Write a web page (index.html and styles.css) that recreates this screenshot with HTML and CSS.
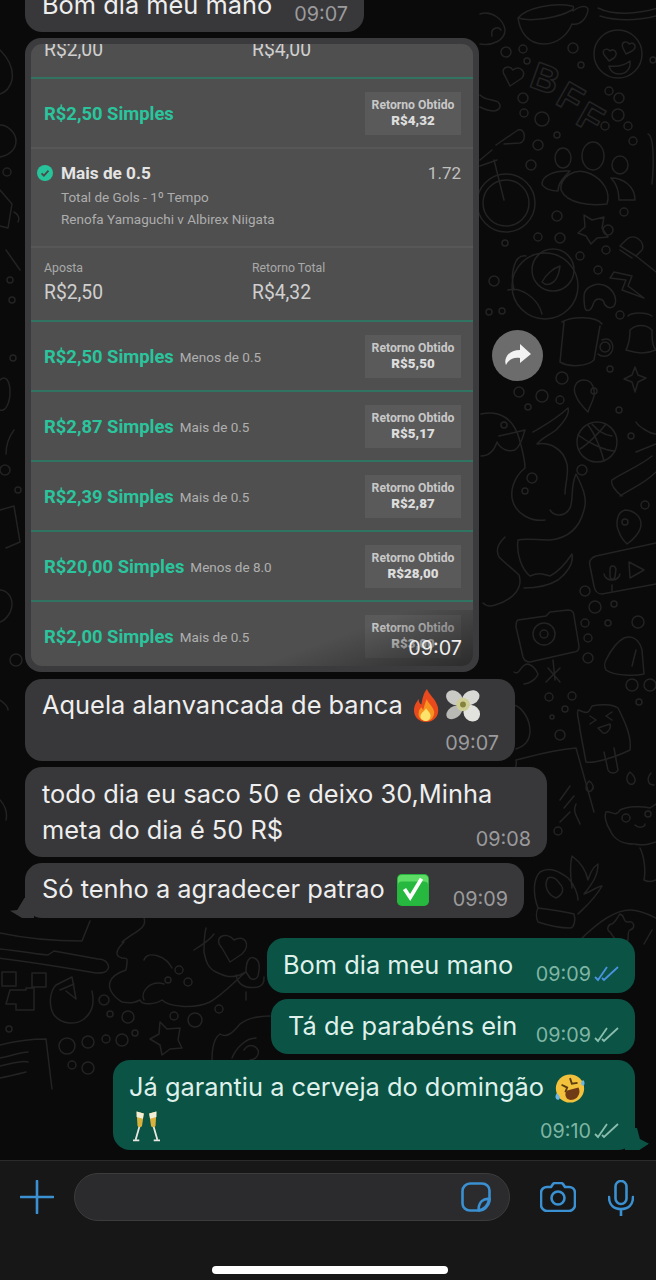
FILE: index.html
```html
<!DOCTYPE html>
<html lang="pt-BR">
<head>
    <meta charset="UTF-8">
    <meta name="viewport" content="width=device-width, initial-scale=1.0">
    <title>Conversa</title>
    <link rel="stylesheet" href="styles.css">
</head>
<body>
    <div class="phone">
        <!-- wallpaper doodles, coordinates are page pixels -->
        <svg class="doodles" viewBox="0 0 656 1160" aria-hidden="true">
            <!-- cup -->
            <path d="M518 18c2 14 10 26 26 26 14 0 24-10 28-20 8 2 15-6 16-14 0-4-6-5-12-1l-3 2M518 18c8-10 36-16 54-12 2 0 2 3 0 4-14 8-40 12-54 8z"/>
            <path d="M598 8c16 8 40 6 60 0M600 16c20 6 40 4 56 0"/>
            <!-- heart eyes -->
            <circle cx="618" cy="54" r="24"/>
            <path d="M605 56c-5-6 2-9 5-5 4-3 9 2 4 7l-5 3zM623 48c-3-6 4-8 6-4 5-3 9 3 3 7l-6 3zM609 66c8 1 16-1 21-5 1 8-4 13-11 13-5 0-9-3-10-8z"/>
            <!-- heart, half face -->
            <path d="M505 76c-6-8 4-12 8-6 6-5 14 1 9 8l-12 8z"/>
            <path d="M480 14c12-4 24 6 25 16 0 10-12 16-25 14M492 36c-2-8 6-10 9-6"/>
            <path d="M480 95c6 6 14 4 18 7 4 4 2 8-4 9-6 0-10-2-14-4"/>
            <circle cx="506" cy="52" r="5"/>
            <circle cx="523" cy="49" r="4"/>
            <circle cx="573" cy="48" r="5"/>
            <circle cx="527" cy="61" r="3"/>
            <circle cx="581" cy="65" r="3"/>
            <circle cx="523" cy="98" r="5"/>
            <circle cx="524" cy="113" r="4"/>
            <circle cx="542" cy="119" r="7"/>
            <circle cx="557" cy="135" r="3"/>
            <circle cx="538" cy="145" r="5"/>
            <circle cx="531" cy="165" r="5"/>
            <circle cx="609" cy="91" r="4"/>
            <circle cx="619" cy="98" r="5"/>
            <circle cx="618" cy="115" r="6"/>
            <circle cx="605" cy="126" r="4"/>
            <circle cx="628" cy="126" r="4"/>
            <circle cx="633" cy="141" r="4"/>
            <circle cx="653" cy="60" r="3"/>
            <!-- BFF -->
            <text class="doodle-word" transform="translate(528 86) rotate(20)">B</text>
            <text class="doodle-word" transform="translate(554 103) rotate(30)">F</text>
            <text class="doodle-word" transform="translate(574 123) rotate(30)">F</text>
            <!-- bike -->
            <circle cx="506" cy="203" r="29"/>
            <circle cx="506" cy="203" r="23"/>
            <path d="M504 200l-10-40M496 145l22-15c8-2 8 12 2 13l-16 1M497 160l-17 6M492 150l-12 10"/>
            <!-- group of people -->
            <ellipse cx="563" cy="158" rx="8" ry="10"/>
            <ellipse cx="593" cy="156" rx="11" ry="14"/>
            <ellipse cx="620" cy="165" rx="8" ry="9"/>
            <path d="M561 190c-2-12 14-24 30-16 12 6 20 18 16 30-16 2-40 0-46-14zM542 184c0-8 12-14 28-13-6 6-12 12-12 20-6 0-14-2-16-7zM611 178c12 0 24 8 24 22h-16c0-8-2-16-8-22z"/>
            <!-- star -->
            <path d="M584 215l8 5 12-3-2 11 6 9-11 1-6 6-5-8-8-3 7-6z"/>
            <path d="M648 134c6 2 6 30 4 50"/>
            <circle cx="557" cy="216" r="5"/>
            <circle cx="538" cy="237" r="4"/>
            <circle cx="560" cy="238" r="5"/>
            <circle cx="608" cy="230" r="5"/>
            <circle cx="624" cy="212" r="4"/>
            <circle cx="606" cy="250" r="4"/>
            <circle cx="580" cy="256" r="4"/>
            <circle cx="598" cy="270" r="4"/>
            <circle cx="494" cy="281" r="5"/>
            <circle cx="505" cy="243" r="3"/>
            <circle cx="489" cy="312" r="3"/>
            <circle cx="502" cy="311" r="3"/>
            <circle cx="620" cy="315" r="4"/>
            <!-- brush -->
            <path d="M626 240c8-8 20 2 16 10l-6 6-16-10zM636 256l20 16M620 250l12 8"/>
            <!-- bolt -->
            <path d="M614 272l18 4-4 10 16 12-22-8 4-10-16-2z"/>
            <!-- fruit -->
            <circle cx="545" cy="286" r="33"/>
            <circle cx="553" cy="270" r="21"/>
            <path d="M542 282c4-8 12-14 18-16-1 8-4 16-10 18-3 1-6 0-8-2z"/>
            <path d="M514 290c-4-16 0-36 12-34M508 290c12-4 30 8 34 24"/>
            <!-- mushroom -->
            <path d="M584 296c0-10 14-14 22-10 8 4 12 14 8 20-4 4-10 0-10-4-2-4-8-4-10 0-2 6-4 10-8 8-2-2-2-8-2-14z"/>
            <!-- mug -->
            <path d="M562 322c10-6 34-6 40 2M564 322l-4 40c10 6 28 4 34-2l6-34M602 340c10-4 14 8 8 14-4 4-10 2-12 0"/>
            <circle cx="605" cy="347" r="5"/>
            <!-- bell -->
            <path d="M628 316c4-4 18-4 24 0M626 350c14 4 20 4 30 0-4-4-4-12-4-20-6-6-16-6-22 0 0 8-2 16-4 20z"/>
            <!-- sparkle and pin -->
            <path d="M635 367l3 8 8 3-8 4-3 10-3-10-8-3 8-4z"/>
            <path d="M584 380c-8 0-12 8-8 16 2 6 8 12 12 16 2-8 8-14 6-22-1-6-4-10-10-10z"/>
            <circle cx="594" cy="391" r="3"/>
            <circle cx="562" cy="378" r="6"/>
            <circle cx="519" cy="392" r="5"/>
            <circle cx="542" cy="396" r="6"/>
            <circle cx="560" cy="400" r="4"/>
            <circle cx="528" cy="407" r="3"/>
            <circle cx="610" cy="369" r="3"/>
            <circle cx="619" cy="410" r="3"/>
            <circle cx="631" cy="436" r="3"/>
            <!-- basketball -->
            <circle cx="597" cy="442" r="20"/>
            <path d="M588 425c8 10 14 28 16 36M606 424c-6 8-18 20-26 25M578 435c8 6 26 16 37 16M592 424c4 4 8 10 20 12"/>
            <circle cx="582" cy="470" r="5"/>
            <!-- snake with glasses -->
            <path d="M481 414c18-4 32 4 38 24 4 14 6 24 6 30-10 8-16 22-12 34 4 12 18 20 32 18"/>
            <path d="M481 456c10 0 14-8 16-14 4 8 12 10 18 8 6-4 8-14 10-20l-26 6"/>
            <path d="M533 432c10-6 22-12 35-24 2 6-4 14-12 22-8 6-14 8-19 14 12-2 26 4 30 20 2 10-2 20-2 30"/>
            <path d="M550 510c4 6 14 8 20-2 4-10 0-20 6-34 6 12 12 24 8 36-4 16-14 28-34 30-12 0-26-2-32 0-2 14 4 30 12 36 10-4 12-2 20 0 8-4 14-10 22-22 2 10-6 20-14 26-10 6-20 8-34 8"/>
            <path d="M505 537c-6 6-10 12-6 20 8 8 14 12 20 18 4 12-4 24-24 30-6 2-10 0-12-2"/>
            <circle cx="532" cy="478" r="5"/>
            <circle cx="504" cy="425" r="3"/>
            <circle cx="525" cy="491" r="3"/>
            <!-- ribbon -->
            <path d="M636 422c2 4 14 12 20 12M612 480c8-6 28-14 40-24M620 496c12-8 24-12 36-24M612 480c-2 4 4 12 10 16M636 452l20-8"/>
            <circle cx="645" cy="505" r="4"/>
            <path d="M625 510c-8 2-10 14-6 22 2 6 6 10 8 12 6-4 14-12 14-20 0-8-8-14-16-14z"/>
            <circle cx="625" cy="522" r="3"/>
            <!-- clapper -->
            <path d="M596 556l60-13M596 556c-6 2-7 6-6 10l4 20c1 6 4 8 8 8l54-10"/>
            <path d="M610 569c0-4 5-4 6 0l-1 8c-1 3-4 3-5 0zM604 574c2 8 14 8 16 0M612 585v6M629 562l15 8-14 8z"/>
            <circle cx="585" cy="591" r="5"/>
            <circle cx="595" cy="607" r="6"/>
            <circle cx="614" cy="604" r="3"/>
            <circle cx="585" cy="623" r="4"/>
            <circle cx="608" cy="623" r="3"/>
            <circle cx="588" cy="638" r="4"/>
            <circle cx="588" cy="658" r="5"/>
            <!-- camera -->
            <path d="M518 620l28-4 4-4 18-2c4 0 6 2 6 6l5 30c0 4-2 6-5 6l-44 10c-4 0-6-2-7-5l-7-30c0-4 0-6 2-7z"/>
            <circle cx="544" cy="634" r="11"/>
            <circle cx="544" cy="634" r="4"/>
            <!-- bell two -->
            <path d="M606 660c4-8 10-18 18-22 10-4 16 4 18 12l2 24c-8 2-30 2-38-4-2-4-2-6 0-10zM636 650l-4 16"/>
            <circle cx="638" cy="622" r="6"/>
            <path d="M548 668l12 14M560 668l-14 14M553 660l2 20"/>
            <!-- ice cream -->
            <path d="M578 710c-2 6 2 12 2 20l6 32c8 2 32-6 44-12 2-14-6-30-12-42-6-4-18-4-26-2-2 4-4 8-8 6-2 0-4-2-6-2z"/>
            <path d="M604 752l4 18c2 4 8 4 10 0l-4-22M590 716l6 4-6 4M612 712l-6 4 6 4M598 728l12-4c2 6-6 12-8 8z"/>
            <path d="M589 781c-5 6-3 12 2 10 4-3 2-8-2-10zM630 772c-6 6-2 14 3 12 4-3 2-8-3-12zM651 773c-5 6-3 12 3 12"/>
            <path d="M514 672c6 4 6-8 14-8 6 2 8 6 10 10-2 6-10 10-14 10M514 705c8 2 16 14 16 26 0 12-8 16-14 18"/>
            <circle cx="632" cy="685" r="6"/>
            <circle cx="650" cy="685" r="6"/>
            <circle cx="639" cy="702" r="3"/>
            <!-- cat -->
            <path d="M606 812c4-2 10 6 14-2 8-4 22-4 30-2l6-4M606 812c-2 4 0 12 4 18 4 10 14 14 24 14 10 2 16 0 22-2"/>
            <circle cx="626" cy="818" r="4"/>
            <circle cx="648" cy="814" r="3"/>
            <path d="M635 825c4 4 10 2 10-1M640 848c4 8 6 22 4 32 4 2 8 2 12 0"/>
            <!-- map box -->
            <path d="M516 760c16-4 36-10 60-12l18 64M500 783c10-2 18-16 16-23M560 800l10-14M564 808l10-12M576 804c-4 8 2 14 4 20M570 812l-10 10"/>
            <circle cx="558" cy="831" r="4"/>
            <circle cx="560" cy="735" r="5"/>
            <circle cx="549" cy="697" r="4"/>
            <circle cx="572" cy="696" r="4"/>
            <circle cx="565" cy="709" r="3"/>
            <circle cx="552" cy="717" r="2"/>
            <!-- hand -->
            <path d="M538 908c-6-16-4-30 2-36 10-6 20 0 28 6 6 6 10 16 10 22M572 888c-2-14-2-24 0-32 8 6 14 14 16 24 2-6 4-12 10-16 0 12-6 20-14 30 6-2 14-8 18-8-8 14-16 20-24 28"/>
            <path d="M548 878c-4 6-2 16 8 20 8-4 8-10 4-14-4-6-8-8-12-6zM538 908c16 2 28 4 36 6 2 6 0 14-4 14-12 0-26-4-32-6-2-4-2-10 0-14z"/>
            <!-- gamepad -->
            <path d="M580 940c16-16 34-30 50-30 8 0 18 4 26 8M620 914c6 2 2 8 8 8 6-2 8 6 2 8-2 0-2 6-2 10-4 4-8-2-10 0-4 0-6-6-8-8-4-2-2-8 2-8 4-2 6-8 8-10zM644 944l8-14"/>
            <!-- laptop -->
            <path d="M0 933c28 6 56 8 82 8l8-20M0 949c22 2 40 6 48 6l6-4 44 8c8 0 12 6 10 10-2 4-6 4-12 4-34-6-72-12-106-16"/>
            <!-- crescent and cloud -->
            <path d="M122 942c12-10 26-14 22-24M124 942c-8 8-10 14-2 16 6 0 6 0 4 12-6 2-14 6-16 12-2 6 2 14 12 20 10 2 14 0 18-2 2 6 16 4 22 0 6 6 30 10 48 2 14-8 28-24 36-30-14 8-22 4-30 0-8-4-10-10-12-20 0-6 0-16 2-24M144 960c4-10 22-4 28 8M144 1000c-4-8 6-20 20-16"/>
            <path d="M214 934c-6 8-14 12-20 16"/>
            <circle cx="179" cy="970" r="4"/>
            <circle cx="168" cy="980" r="3"/>
            <circle cx="188" cy="982" r="4"/>
            <!-- heart and mic -->
            <path d="M222 948c-10-10 4-18 12-8 10-6 18 4 8 14l-12 8z"/>
            <path d="M246 972c0-12 4-16 8-14 6 2 6 10 4 18-2 4-6 4-8 2zM236 975c2 10 10 14 22 12 6-2 6-6 6-10M246 992v8"/>
            <!-- pixel game -->
            <path d="M2 972h14v14H2zM32 973h14v14H32zM10 990h16v-2h8v22h-18v-6H6z"/>
            <!-- reload -->
            <path d="M72 977l-16 8c-6 6-8 20-2 30 8 10 22 10 30 4 10-8 10-18 8-28M72 977l4 22-10 -8M74 984l-14 6"/>
            <circle cx="104" cy="1000" r="5"/>
            <circle cx="110" cy="1014" r="3"/>
            <circle cx="128" cy="1017" r="6"/>
            <circle cx="9" cy="1029" r="3"/>
            <circle cx="67" cy="1046" r="8"/>
            <circle cx="88" cy="1042" r="6"/>
            <circle cx="106" cy="1039" r="4"/>
            <circle cx="122" cy="1040" r="6"/>
            <circle cx="135" cy="1033" r="3"/>
            <circle cx="72" cy="1065" r="4"/>
            <circle cx="88" cy="1068" r="6"/>
            <circle cx="174" cy="1016" r="4"/>
            <circle cx="195" cy="1020" r="7"/>
            <circle cx="219" cy="1009" r="4"/>
            <path d="M160 1022l7 7 13-1-2 12 4 8-12 1-8 6-2-10-10-6 9-5z"/>
            <path d="M212 1060c0-10 2-22 8-26 6 4 12 0 20-10 10-8 26-8 30-8M232 1058c4-10 14-20 24-20M244 1050c4-6 10-6 14 0 2 6-4 10-8 10"/>
            <path d="M0 1045c16-4 34-6 46-6l6 50M0 1058c10-2 22-6 28-6M0 1066c10-2 22-6 28-4M0 1078c10-2 18-4 26-6"/>
            <!-- left edge -->
            <path d="M0 50c8 8 14 18 12 30-2 8-6 12-12 14M0 125c8 0 16 8 16 16s-6 14-16 16"/>
            <circle cx="7" cy="172" r="4"/>
            <path d="M0 190l12 14-4 24-8-2M14 212c4 2 6 6 4 10M6 250l14 20"/>
            <circle cx="10" cy="280" r="3"/>
            <circle cx="12" cy="300" r="3"/>
            <circle cx="13" cy="358" r="3"/>
            <circle cx="5" cy="470" r="5"/>
            <circle cx="18" cy="490" r="3"/>
            <circle cx="16" cy="660" r="6"/>
            <path d="M0 380c6-6 10 2 10 12s-4 20-10 18M0 510l14-4 6 36-14 6M0 590c6 0 12 6 12 14s-6 16-12 18M14 430c-6 8-8 16-8 24M0 700c6 4 8 8 8 10M0 800c4 4 8 12 6 20"/>
        </svg>

        <main class="chat">
            <div class="msg msg--in msg--top msg--row">
                <span class="msg-text">Bom dia meu mano</span>
                <span class="msg-time">09:07</span>
            </div>

            <div class="shot-row">
                <div class="shot">
                    <div class="slip">
                        <div class="stake stake--cut">
                            <div class="stake-col"><div class="stake-value">R$2,00</div></div>
                            <div class="stake-col"><div class="stake-value">R$4,00</div></div>
                        </div>

                        <div class="bet-row">
                            <span class="bet-amount">R$2,50 Simples</span>
                            <div class="return-box">Retorno Obtido<b>R$4,32</b></div>
                        </div>

                        <div class="detail">
                            <svg class="detail-check" viewBox="0 0 16 16"><circle cx="8" cy="8" r="8" fill="#27c39a"/><path d="M4.500 8.300l2.400 2.400 4.600-5" fill="none" stroke="#4a4a4a" stroke-width="1.800"/></svg>
                            <div class="detail-body">
                                <div class="detail-title">Mais de 0.5</div>
                                <div class="detail-sub detail-sub--first">Total de Gols - 1º Tempo</div>
                                <div class="detail-sub">Renofa Yamaguchi v Albirex Niigata</div>
                            </div>
                            <div class="detail-odds">1.72</div>
                        </div>

                        <div class="stake">
                            <div class="stake-col">
                                <div class="stake-label">Aposta</div>
                                <div class="stake-value">R$2,50</div>
                            </div>
                            <div class="stake-col">
                                <div class="stake-label">Retorno Total</div>
                                <div class="stake-value">R$4,32</div>
                            </div>
                        </div>

                        <div class="bet-row">
                            <span class="bet-amount">R$2,50 Simples</span>
                            <span class="bet-pick">Menos de 0.5</span>
                            <div class="return-box">Retorno Obtido<b>R$5,50</b></div>
                        </div>
                        <div class="bet-row">
                            <span class="bet-amount">R$2,87 Simples</span>
                            <span class="bet-pick">Mais de 0.5</span>
                            <div class="return-box">Retorno Obtido<b>R$5,17</b></div>
                        </div>
                        <div class="bet-row">
                            <span class="bet-amount">R$2,39 Simples</span>
                            <span class="bet-pick">Mais de 0.5</span>
                            <div class="return-box">Retorno Obtido<b>R$2,87</b></div>
                        </div>
                        <div class="bet-row">
                            <span class="bet-amount">R$20,00 Simples</span>
                            <span class="bet-pick">Menos de 8.0</span>
                            <div class="return-box">Retorno Obtido<b>R$28,00</b></div>
                        </div>
                        <div class="bet-row">
                            <span class="bet-amount">R$2,00 Simples</span>
                            <span class="bet-pick">Mais de 0.5</span>
                            <div class="return-box">Retorno Obtido<b>R$3,00</b></div>
                        </div>

                        <div class="shot-fade"></div>
                        <span class="shot-time">09:07</span>
                    </div>
                </div>
                <button class="forward" aria-label="Encaminhar">
                    <svg viewBox="0 0 26 24"><path d="M15 1l11 10-11 9v-5c-6-1-11 1-14 7-1-2-1-5 0-7 2-5 7-8 14-8z" fill="#f2f2f2"/></svg>
                </button>
            </div>

            <div class="msg msg--in msg--aquela">
                <div class="msg-text msg-text--emoji">
                    Aquela alanvancada de banca
                    <svg class="emoji emoji--fire" viewBox="0 0 30 36">
                        <path d="M16 0c2 6 10 11 12 20 2 10-5 16-13 16S1 30 2 21c1-5 3-7 5-10 0 3 1 5 3 6 1-6 2-12 6-17z" fill="#e8491d"/>
                        <path d="M16 11c1 5 7 8 8 14 0 6-4 10-9 10s-9-4-8-9c0-3 2-5 3-6 1 1 1 2 2 3 1-4 2-8 4-12z" fill="#f79420"/>
                        <path d="M15 21c2 3 5 5 5 8s-2 6-5 6-6-2-6-5c0-4 4-5 6-9z" fill="#fde36b"/>
                    </svg>
                    <svg class="emoji emoji--flower" viewBox="0 0 36 34">
                        <ellipse cx="9" cy="9" rx="9" ry="7" transform="rotate(35 9 9)" fill="#c9c9c5"/>
                        <ellipse cx="26" cy="9" rx="9.500" ry="7" transform="rotate(-30 26 9)" fill="#d8d8d4"/>
                        <ellipse cx="9" cy="24" rx="9" ry="6" transform="rotate(-35 9 24)" fill="#b8b8b4"/>
                        <ellipse cx="27" cy="25" rx="9" ry="8" transform="rotate(45 27 25)" fill="#e2e2de"/>
                        <circle cx="18" cy="16" r="7" fill="#cfcd96"/>
                        <circle cx="18" cy="16" r="3" fill="#85823e"/>
                    </svg>
                </div>
                <div class="msg-foot"><span class="msg-time">09:07</span></div>
            </div>

            <div class="msg msg--in msg--row msg--todo">
                <span class="msg-text msg-text--long">todo dia eu saco 50 e deixo 30,Minha<br>meta do dia é 50 R$</span>
                <span class="msg-time msg-time--low2">09:08</span>
            </div>

            <div class="msg msg--in msg--row msg--tail-left msg--agradecer">
                <span class="msg-text msg-text--emoji">
                    Só tenho a agradecer patrao
                    <svg class="emoji emoji--check" viewBox="0 0 34 34">
                        <rect width="34" height="34" rx="5" fill="#24b53c"/>
                        <rect x="1" y="1" width="32" height="16" rx="4" fill="#5ddc66"/>
                        <rect x="1" y="8" width="32" height="25" rx="4" fill="#26b83f"/>
                        <path d="M8 16l6 9L26 5" fill="none" stroke="#fff" stroke-width="4"/>
                    </svg>
                </span>
                <span class="msg-time msg-time--low">09:09</span>
            </div>

            <div class="msg msg--out msg--row msg--gap msg--bom">
                <span class="msg-text">Bom dia meu mano</span>
                <span class="msg-meta msg-meta--low">
                    <span class="msg-time">09:09</span>
                    <svg class="ticks ticks--read" viewBox="0 0 26 16"><path d="M1 11l3 3L13 1M8 12l2 2L24 1"/></svg>
                </span>
            </div>

            <div class="msg msg--out msg--row msg--parabens">
                <span class="msg-text">Tá de parabéns ein</span>
                <span class="msg-meta msg-meta--low">
                    <span class="msg-time">09:09</span>
                    <svg class="ticks" viewBox="0 0 26 16"><path d="M1 11l3 3L13 1M8 12l2 2L24 1"/></svg>
                </span>
            </div>

            <div class="msg msg--out msg--tail-right msg--cerveja">
                <div class="msg-text msg-text--emoji">
                    Já garantiu a cerveja do domingão
                    <svg class="emoji emoji--rofl" viewBox="0 0 34 34">
                        <circle cx="17" cy="17" r="15" fill="#f3c23c"/>
                        <path d="M8 13l6 3-2 5M17 6l2 6 6-1" fill="none" stroke="#5b3c12" stroke-width="2"/>
                        <path d="M14 28c-3-4-2-7 0-9l12-3c2 4 1 8-2 11-3 2-7 3-10 1z" fill="#6e3b16"/>
                        <path d="M3 22c-2 3-2 6 1 7 3 0 3-4-1-7zM31 8c2 2 2 5 0 6-3 0-3-4 0-6z" fill="#6cb7e8"/>
                    </svg>
                </div>
                <div class="msg-second">
                    <svg class="emoji emoji--cheers" viewBox="0 0 30 34">
                        <path d="M4 1l8 2-2 14c-1 2-4 2-5 0z" fill="#d9b23e"/>
                        <path d="M26 1l-8 2 2 14c1 2 4 2 5 0z" fill="#d9b23e"/>
                        <path d="M4 1l8 2-1 6-7-2zM26 1l-8 2 1 6 7-2z" fill="#f2eed8"/>
                        <path d="M7 18L3 32M0 33h7M23 18l4 14M23 33h7" fill="none" stroke="#e8e8e0" stroke-width="2"/>
                    </svg>
                    <span class="msg-meta">
                        <span class="msg-time">09:10</span>
                        <svg class="ticks" viewBox="0 0 26 16"><path d="M1 11l3 3L13 1M8 12l2 2L24 1"/></svg>
                    </span>
                </div>
            </div>
        </main>

        <footer class="composer">
            <svg class="composer-icon composer-plus" viewBox="0 0 34 34"><path d="M17 1v32M1 17h32"/></svg>
            <div class="composer-input">
                <svg class="composer-icon composer-sticker" viewBox="0 0 30 30">
                    <path d="M9 1.500h12c4 0 7.500 3 7.500 7v10.500c-1 5-5 9.500-10.500 9.500H9c-4 0-7.500-3-7.500-7V9c0-4 3.500-7.500 7.500-7.500z"/>
                    <path d="M28.500 17c-6-1-11 3-11 11.500M28 18c-1 5-5 9-10 10.500"/>
                </svg>
            </div>
            <svg class="composer-icon composer-camera" viewBox="0 0 36 30">
                <path d="M7 5h4l2-3c.5-.6 1-1 2-1h6c1 0 1.500.4 2 1l2 3h4c3 0 6 2 6 6v12c0 3-3 6-6 6H7c-3 0-6-3-6-6V11c0-4 3-6 6-6z"/>
                <circle cx="18" cy="16" r="6.500"/>
            </svg>
            <svg class="composer-icon composer-mic" viewBox="0 0 26 36">
                <rect x="7.500" y="1" width="11" height="23" rx="5.500"/>
                <path d="M1 17c0 8 5 12 12 12s12-4 12-12M13 29v7"/>
            </svg>
            <div class="home-bar"></div>
        </footer>
    </div>
</body>
</html>
```

FILE: styles.css
```css
:root {
    --in-bubble: #38383a;
    --out-bubble: #0a5345;
    --time-in: #9b9b9d;
    --time-out: #7fb5a4;
    --blue: #3a90d0;
    --slip-bg: #4f4f4f;
    --slip-line: #2f7360;
    --slip-green: #2ac59d;
}

* {
    box-sizing: border-box;
    margin: 0;
    padding: 0;
}

body {
    background-color: #0a0a0b;
    font-family: 'Inter', 'Liberation Sans', sans-serif;
}

.phone {
    position: relative;
    width: 656px;
    height: 1280px;
    overflow: hidden;
    display: flex;
    flex-direction: column;
}

.doodles {
    position: absolute;
    top: 0;
    left: 0;
    width: 656px;
    height: 1160px;
    fill: none;
    stroke: #232324;
    stroke-width: 1.5;
    stroke-linecap: round;
    stroke-linejoin: round;
}

.doodle-word {
    font-family: 'Liberation Sans', sans-serif;
    font-weight: bold;
    font-size: 38px;
}

/* chat column */
.chat {
    position: relative;
    height: 1160px;
    display: flex;
    flex-direction: column;
}

.msg {
    position: relative;
    border-radius: 17px;
    color: #eeeeee;
    flex: none;
}

.msg--in {
    background-color: var(--in-bubble);
    margin-left: 25px;
    padding-left: 17px;
    padding-right: 16px;
}

.msg--out {
    background-color: var(--out-bubble);
    color: #dff1ea;
    margin-left: auto;
    margin-right: 21px;
    margin-top: 6px;
    padding-right: 15px;
}

.msg--row {
    display: flex;
    justify-content: space-between;
    align-items: flex-end;
}

.msg-text {
    font-size: 25.4px;
    line-height: 36px;
}

.msg-text--long {
    white-space: nowrap;
    margin-right: -60px;
}

.msg-time {
    font-size: 19.8px;
    line-height: 22px;
    color: var(--time-in);
}

.msg--out .msg-time {
    color: var(--time-out);
}

.msg-time--low {
    margin-bottom: -3px;
}

.msg-time--low2 {
    margin-bottom: -2px;
}

.msg-meta {
    display: flex;
    align-items: center;
    gap: 3px;
}

.msg-meta--low {
    margin-bottom: -2px;
}

.ticks {
    width: 26px;
    height: 16px;
    fill: none;
    stroke: #8bbdad;
    stroke-width: 1.8;
}

.ticks--read {
    stroke: #4a93e0;
}

.emoji {
    display: inline-block;
    vertical-align: middle;
}

.emoji--fire {
    width: 30px;
    height: 33px;
    margin-left: 1px;
    margin-top: -4px;
}

.emoji--flower {
    width: 36px;
    height: 33px;
    margin-left: -3px;
    margin-top: -4px;
}

.emoji--check {
    width: 34px;
    height: 32px;
    margin-left: 4px;
    margin-top: -3px;
}

.emoji--rofl {
    width: 32px;
    height: 33px;
    margin-left: 3px;
    margin-top: -2px;
}

.emoji--cheers {
    width: 27px;
    height: 32px;
    margin-left: 4px;
}

.msg--top {
    width: 339px;
    height: 52px;
    margin-top: -20px;
    padding-bottom: 5px;
    align-items: center;
}

.msg--top .msg-text {
    margin-top: 2px;
}

.msg--top .msg-time {
    margin-top: 20px;
}

.msg--aquela {
    width: 490px;
    height: 82px;
    margin-top: 7px;
    padding-top: 8px;
}

.msg-foot {
    display: flex;
    justify-content: flex-end;
    margin-top: 9px;
}

.msg--todo {
    width: 522px;
    height: 90px;
    margin-top: 6px;
    padding-top: 9px;
    padding-bottom: 9px;
}

.msg--agradecer {
    width: 499px;
    height: 55px;
    margin-top: 6px;
    padding-top: 8px;
    padding-bottom: 11px;
}

.msg--tail-left::before {
    content: "";
    position: absolute;
    left: -15px;
    bottom: 0;
    width: 24px;
    height: 20px;
    background-color: var(--in-bubble);
    clip-path: polygon(60% 0, 100% 0, 100% 100%, 50% 100%, 0 64%, 30% 60%);
}

.msg--gap {
    margin-top: 20px;
}

.msg--bom {
    width: 368px;
    height: 55px;
    padding-left: 16px;
    padding-top: 7px;
    padding-bottom: 10px;
}

.msg--parabens {
    width: 364px;
    height: 55px;
    padding-left: 17px;
    padding-top: 7px;
    padding-bottom: 10px;
}

.msg--cerveja {
    width: 522px;
    height: 90px;
    padding-left: 16px;
    padding-top: 9px;
    padding-bottom: 8px;
}

.msg-second {
    display: flex;
    justify-content: space-between;
    align-items: flex-end;
    height: 37px;
}

.msg--tail-right::after {
    content: "";
    position: absolute;
    right: -14px;
    bottom: 0;
    width: 24px;
    height: 22px;
    background-color: var(--out-bubble);
    clip-path: polygon(0 0, 50% 0, 62% 50%, 100% 72%, 60% 100%, 0 100%);
}

/* screenshot of the bet slip */
.shot-row {
    display: flex;
    align-items: center;
    gap: 13px;
    margin-top: 6px;
    margin-left: 25px;
    flex: none;
}

.shot {
    width: 454px;
    height: 634px;
    padding: 6px;
    background-color: #3b3b3d;
    border-radius: 16px;
}

.slip {
    position: relative;
    height: 622px;
    overflow: hidden;
    border-radius: 11px;
    background-color: var(--slip-bg);
    font-family: 'Roboto', 'Liberation Sans', sans-serif;
}

.stake {
    display: flex;
    height: 74px;
    padding-top: 12px;
    padding-left: 13px;
    border-top: 2px solid #575757;
}

.stake--cut {
    height: 33px;
    padding-top: 0;
    border-top: 0;
}

.stake--cut .stake-value {
    margin-top: -4px;
}

.stake-col {
    width: 208px;
}

.stake-label {
    font-size: 12.3px;
    line-height: 16px;
    color: #a9a9a9;
}

.stake-value {
    margin-top: 7px;
    font-size: 19.3px;
    line-height: 20px;
    color: #cfcfcf;
}

.bet-row {
    display: flex;
    align-items: center;
    height: 70px;
    padding: 0 12px 0 13px;
    border-top: 2px solid var(--slip-line);
}

.bet-amount {
    font-size: 18.4px;
    font-weight: 700;
    color: var(--slip-green);
}

.bet-pick {
    margin-left: 6px;
    margin-top: 2px;
    font-size: 13.5px;
    color: #b0b0b0;
}

.return-box {
    display: flex;
    flex-direction: column;
    justify-content: center;
    align-items: center;
    width: 96px;
    height: 43px;
    margin-left: auto;
    background-color: #5a5a5a;
    font-size: 12.2px;
    line-height: 15px;
    font-weight: 700;
    color: #c8c8c8;
}

.return-box b {
    font-size: 13.4px;
    color: #dddddd;
}

.detail {
    display: flex;
    align-items: flex-start;
    height: 99px;
    padding: 12px 12px 0 6px;
    border-top: 2px solid #575757;
}

.detail-check {
    width: 16px;
    height: 16px;
    margin-top: 4px;
    margin-right: 8px;
    flex: none;
}

.detail-body {
    flex: 1;
}

.detail-title {
    font-size: 17.2px;
    line-height: 24px;
    font-weight: 700;
    color: #e4e4e4;
}

.detail-sub {
    font-size: 13.5px;
    line-height: 22px;
    color: #adadad;
}

.detail-sub--first {
    margin-top: 1px;
}

.detail-odds {
    font-size: 17px;
    line-height: 24px;
    color: #c0c0c0;
}

.shot-fade {
    position: absolute;
    right: 0;
    bottom: 0;
    width: 240px;
    height: 56px;
    background: linear-gradient(160deg, rgba(40, 40, 40, 0) 45%, rgba(40, 40, 40, 0.9) 100%);
}

.shot-time {
    position: absolute;
    right: 11px;
    bottom: 6px;
    font-family: 'Inter', 'Liberation Sans', sans-serif;
    font-size: 19.8px;
    line-height: 24px;
    color: #eeeeee;
}

.forward {
    width: 51px;
    height: 51px;
    border: none;
    border-radius: 50%;
    background-color: #6c6c6c;
    display: flex;
    align-items: center;
    justify-content: center;
}

.forward svg {
    width: 26px;
    height: 24px;
}

/* bottom bar */
.composer {
    position: relative;
    height: 120px;
    display: flex;
    align-items: flex-start;
    padding-top: 12px;
    background-color: #171717;
    border-top: 1px solid #2b2b2b;
}

.composer-icon {
    fill: none;
    stroke: var(--blue);
    stroke-width: 2.6;
    stroke-linecap: round;
    stroke-linejoin: round;
    flex: none;
}

.composer-plus {
    width: 34px;
    height: 34px;
    margin-left: 20px;
    margin-top: 7px;
}

.composer-input {
    display: flex;
    align-items: center;
    justify-content: flex-end;
    width: 436px;
    height: 48px;
    margin-left: 20px;
    padding-right: 18px;
    background-color: #2b2b2d;
    border: 1px solid #3c3c3c;
    border-radius: 24px;
}

.composer-sticker {
    width: 30px;
    height: 30px;
}

.composer-camera {
    width: 36px;
    height: 30px;
    margin-left: 30px;
    margin-top: 9px;
}

.composer-mic {
    width: 26px;
    height: 36px;
    margin-left: 32px;
    margin-top: 7px;
}

.home-bar {
    position: absolute;
    left: 212px;
    top: 105px;
    width: 236px;
    height: 8px;
    border-radius: 4px;
    background-color: #ffffff;
}
```
